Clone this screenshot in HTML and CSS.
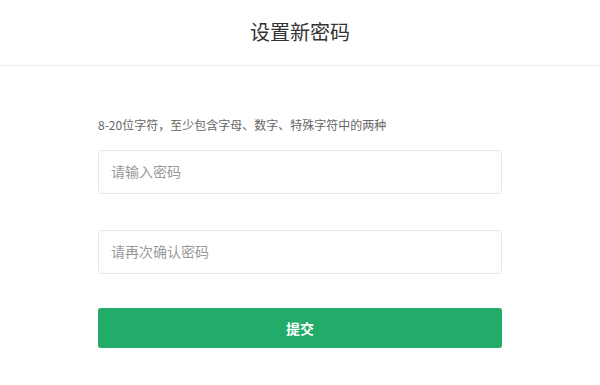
FILE: index.html
```html
<!DOCTYPE html>
<html lang="zh-CN">
<head>
  <meta charset="UTF-8">
  <meta name="viewport" content="width=device-width, initial-scale=1.0">
  <title>设置新密码</title>
  <link rel="stylesheet" href="styles.css">
</head>
<body>
  <div class="header">设置新密码</div>
  <form class="form">
    <p class="hint">8-20位字符，至少包含字母、数字、特殊字符中的两种</p>
    <input type="password" class="field" placeholder="请输入密码">
    <input type="password" class="field second" placeholder="请再次确认密码">
    <button type="button" class="submit">提交</button>
  </form>
</body>
</html>
```

FILE: styles.css
```css
body {
  margin: 0;
  font-family: "Noto Sans CJK SC", "Liberation Sans", sans-serif;
  background: #fff;
  color: #333;
}
.header {
  height: 65px;
  line-height: 64px;
  text-align: center;
  font-size: 20px;
  color: #333;
  border-bottom: 1px solid #eee;
}
.form {
  width: 404px;
  margin: 0 auto;
  padding-top: 50px;
  display: flex;
  flex-direction: column;
}
.hint {
  margin: 0 0 16px;
  font-size: 12px;
  line-height: 18px;
  color: #666;
}
.field {
  box-sizing: border-box;
  height: 44px;
  padding: 0 12px 2px;
  border: 1px solid #e8e8e8;
  border-radius: 3px;
  font-family: inherit;
  font-size: 14px;
  color: #333;
  outline: none;
}
.field::placeholder {
  color: #999;
}
.second {
  margin-top: 36px;
}
.submit {
  margin-top: 34px;
  height: 40px;
  border: none;
  border-radius: 3px;
  background: #22ab69;
  color: #fff;
  font-family: inherit;
  font-size: 14px;
  font-weight: bold;
  cursor: pointer;
}
```
